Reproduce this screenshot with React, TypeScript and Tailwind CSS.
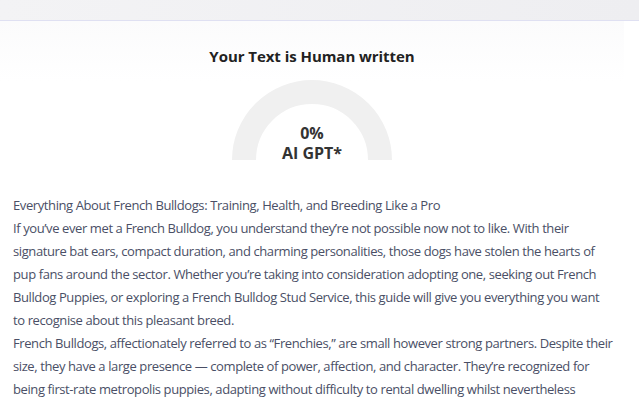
import React from "react";

const lines1 = [
  "Everything About French Bulldogs: Training, Health, and Breeding Like a Pro",
  "If you\u2019ve ever met a French Bulldog, you understand they\u2019re not possible now not to like. With their",
  "signature bat ears, compact duration, and charming personalities, those dogs have stolen the hearts of",
  "pup fans around the sector. Whether you\u2019re taking into consideration adopting one, seeking out French",
  "Bulldog Puppies, or exploring a French Bulldog Stud Service, this guide will give you everything you want",
  "to recognise about this pleasant breed.",
  "French Bulldogs, affectionately referred to as \u201cFrenchies,\u201d are small however strong partners. Despite their",
  "size, they have a large presence \u2014 complete of power, affection, and character. They\u2019re recognized for",
  "being first-rate metropolis puppies, adapting without difficulty to rental dwelling whilst nevertheless",
];

export default function App() {
  return (
    <div className="w-[639px] h-[404px] overflow-hidden bg-white" style={{ fontFamily: '"Open Sans", "Noto Sans", sans-serif' }}>
      <div className="h-[21px] bg-gradient-to-r from-[#f3f3f5] to-[#eeeef1] border-b border-[#dfe0f2]" />
      <div className="w-[624px] bg-gradient-to-b from-[#fbfbfc] to-white to-[60px]">
        <div className="flex flex-col items-center pt-[25px]">
          <h1 className="text-[15px] font-bold text-[#222] leading-[20px] tracking-[-0.05px]">Your Text is Human written</h1>
          <div className="relative mt-[14px] w-[160px] h-[80px]">
            <svg width="160" height="80" viewBox="0 0 160 80" className="block">
              <path d="M 12 80 A 68 68 0 0 1 148 80" fill="none" stroke="#f0f0f0" strokeWidth="24" />
            </svg>
            <div className="absolute left-0 right-0 top-[43px] flex flex-col items-center text-[16px] font-bold text-[#333] leading-[20px]">
              <span>0%</span>
              <span>AI GPT*</span>
            </div>
          </div>
        </div>
        <div className="pl-[13px] pt-[34px] text-[13px] leading-[23px] text-[#4a4f66] whitespace-nowrap tracking-[-0.4px]">
          {lines1.map((l, i) => (
            <div key={i}>{l}</div>
          ))}
        </div>
      </div>
    </div>
  );
}
